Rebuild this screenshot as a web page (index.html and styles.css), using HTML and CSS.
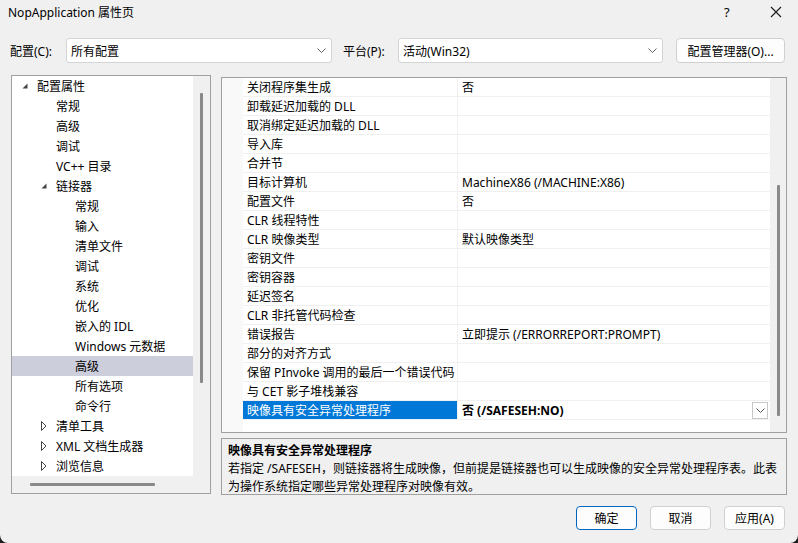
FILE: index.html
```html
<!doctype html>
<html>
<head>
  <meta charset="utf-8">
  <title>NopApplication 属性页</title>
  <link rel="stylesheet" href="styles.css">
</head>
<body>
  <div id="window">
    <div class="titlebar">
      <span class="title">NopApplication 属性页</span>
      <span class="help">?</span>
      <span class="close">
        <svg width="12" height="12" viewBox="0 0 12 12"><path d="M1 1 L11 11 M11 1 L1 11" stroke="#1a1a1a" stroke-width="1.1" fill="none"/></svg>
      </span>
    </div>

    <div class="toolbar">
      <span class="label label-config">配置(C):</span>
      <div class="combo combo-config">
        <span>所有配置</span>
        <svg class="chev" width="9" height="5" viewBox="0 0 9 5"><path d="M0.5 0.5 L4.5 4.5 L8.5 0.5" stroke="#606060" fill="none"/></svg>
      </div>
      <span class="label label-platform">平台(P):</span>
      <div class="combo combo-platform">
        <span>活动(Win32)</span>
        <svg class="chev" width="9" height="5" viewBox="0 0 9 5"><path d="M0.5 0.5 L4.5 4.5 L8.5 0.5" stroke="#606060" fill="none"/></svg>
      </div>
      <button class="btn btn-manager">配置管理器(O)...</button>
    </div>

    <div class="main">
      <div class="tree">
        <div class="tree-items">
          <div class="node lvl0"><span class="exp"><svg width="6" height="6" viewBox="0 0 6 6"><polygon points="5.5,0.5 5.5,5.5 0.5,5.5" fill="#444"/></svg></span>配置属性</div>
          <div class="node lvl1"><span class="exp"></span>常规</div>
          <div class="node lvl1"><span class="exp"></span>高级</div>
          <div class="node lvl1"><span class="exp"></span>调试</div>
          <div class="node lvl1"><span class="exp"></span>VC++ 目录</div>
          <div class="node lvl1"><span class="exp"><svg width="6" height="6" viewBox="0 0 6 6"><polygon points="5.5,0.5 5.5,5.5 0.5,5.5" fill="#444"/></svg></span>链接器</div>
          <div class="node lvl2"><span class="exp"></span>常规</div>
          <div class="node lvl2"><span class="exp"></span>输入</div>
          <div class="node lvl2"><span class="exp"></span>清单文件</div>
          <div class="node lvl2"><span class="exp"></span>调试</div>
          <div class="node lvl2"><span class="exp"></span>系统</div>
          <div class="node lvl2"><span class="exp"></span>优化</div>
          <div class="node lvl2"><span class="exp"></span>嵌入的 IDL</div>
          <div class="node lvl2"><span class="exp"></span>Windows 元数据</div>
          <div class="node lvl2 selected"><span class="exp"></span>高级</div>
          <div class="node lvl2"><span class="exp"></span>所有选项</div>
          <div class="node lvl2"><span class="exp"></span>命令行</div>
          <div class="node lvl1"><span class="exp"><svg width="6" height="10" viewBox="0 0 6 10"><polygon points="0.5,0.5 5,5 0.5,9.5" fill="none" stroke="#444"/></svg></span>清单工具</div>
          <div class="node lvl1"><span class="exp"><svg width="6" height="10" viewBox="0 0 6 10"><polygon points="0.5,0.5 5,5 0.5,9.5" fill="none" stroke="#444"/></svg></span>XML 文档生成器</div>
          <div class="node lvl1"><span class="exp"><svg width="6" height="10" viewBox="0 0 6 10"><polygon points="0.5,0.5 5,5 0.5,9.5" fill="none" stroke="#444"/></svg></span>浏览信息</div>
        </div>
        <div class="vscroll tree-vscroll"><div class="thumb"></div></div>
        <div class="hscroll"><div class="thumb"></div></div>
        <div class="corner"></div>
      </div>

      <div class="right">
        <div class="grid">
          <div class="gutter"></div>
          <div class="rows">
            <div class="row"><div class="name">关闭程序集生成</div><div class="value">否</div></div>
            <div class="row"><div class="name">卸载延迟加载的 DLL</div><div class="value"></div></div>
            <div class="row"><div class="name">取消绑定延迟加载的 DLL</div><div class="value"></div></div>
            <div class="row"><div class="name">导入库</div><div class="value"></div></div>
            <div class="row"><div class="name">合并节</div><div class="value"></div></div>
            <div class="row"><div class="name">目标计算机</div><div class="value">MachineX86 (/MACHINE:X86)</div></div>
            <div class="row"><div class="name">配置文件</div><div class="value">否</div></div>
            <div class="row"><div class="name">CLR 线程特性</div><div class="value"></div></div>
            <div class="row"><div class="name">CLR 映像类型</div><div class="value">默认映像类型</div></div>
            <div class="row"><div class="name">密钥文件</div><div class="value"></div></div>
            <div class="row"><div class="name">密钥容器</div><div class="value"></div></div>
            <div class="row"><div class="name">延迟签名</div><div class="value"></div></div>
            <div class="row"><div class="name">CLR 非托管代码检查</div><div class="value"></div></div>
            <div class="row"><div class="name">错误报告</div><div class="value">立即提示 (/ERRORREPORT:PROMPT)</div></div>
            <div class="row"><div class="name">部分的对齐方式</div><div class="value"></div></div>
            <div class="row"><div class="name">保留 PInvoke 调用的最后一个错误代码</div><div class="value"></div></div>
            <div class="row"><div class="name">与 CET 影子堆栈兼容</div><div class="value"></div></div>
            <div class="row active">
              <div class="name">映像具有安全异常处理程序</div>
              <div class="value"><b>否 (/SAFESEH:NO)</b>
                <span class="dropbtn"><svg width="9" height="5" viewBox="0 0 9 5"><path d="M0.5 0.5 L4.5 4.5 L8.5 0.5" stroke="#505050" fill="none"/></svg></span>
              </div>
            </div>
          </div>
          <div class="vscroll grid-vscroll"><div class="thumb"></div></div>
        </div>

        <div class="desc">
          <div class="desc-title">映像具有安全异常处理程序</div>
          <div class="desc-text">若指定 /SAFESEH，则链接器将生成映像，但前提是链接器也可以生成映像的安全异常处理程序表。此表<br>为操作系统指定哪些异常处理程序对映像有效。</div>
        </div>
      </div>
    </div>

    <div class="footer">
      <button class="btn btn-primary">确定</button>
      <button class="btn">取消</button>
      <button class="btn">应用(A)</button>
    </div>
  </div>
</body>
</html>
```

FILE: styles.css
```css
html {
  background-color: #1e1e1e;
}

body {
  margin: 0;
  font-family: "Noto Sans", "Noto Sans CJK SC", sans-serif;
  font-size: 12px;
  color: #000;
}

#window {
  width: 798px;
  height: 543px;
  background-color: #f0f0f0;
  border-radius: 0 0 8px 8px;
  overflow: hidden;
}

/* title bar */
.titlebar {
  display: flex;
  align-items: center;
  height: 24px;
  padding-left: 8px;
}
.title {
  flex: 1;
}
.help {
  font-size: 13px;
  width: 46px;
}
.close {
  display: flex;
  width: 28px;
}

/* config row */
.toolbar {
  display: flex;
  align-items: center;
  margin-top: 14px;
  height: 25px;
  padding-left: 10px;
}
.label-config {
  width: 56px;
}
.label-platform {
  width: 55px;
  margin-left: 11px;
}
.combo {
  display: flex;
  align-items: center;
  box-sizing: border-box;
  height: 25px;
  padding: 0 5px 0 4px;
  background-color: #fff;
  border: 1px solid #d4d4d4;
  border-radius: 3px;
}
.combo span {
  flex: 1;
}
.combo-config {
  width: 266px;
}
.combo-platform {
  width: 265px;
}
.btn {
  box-sizing: border-box;
  height: 25px;
  font-family: inherit;
  font-size: 12px;
  color: #000;
  background-color: #fdfdfd;
  border: 1px solid #d0d0d0;
  border-radius: 4px;
  padding: 0;
}
.btn-manager {
  width: 109px;
  margin-left: 13px;
}

/* main area */
.main {
  display: flex;
  gap: 10px;
  margin-top: 12px;
  height: 420px;
  padding-left: 11px;
}

.tree {
  display: grid;
  grid-template-columns: 181px 17px;
  grid-template-rows: 400px 17px;
  width: 200px;
  height: 419px;
  box-sizing: border-box;
  border: 1px solid #a0a0a0;
}
.tree-items {
  background-color: #fff;
  overflow: hidden;
}
.node {
  display: flex;
  align-items: center;
  height: 20px;
  white-space: nowrap;
}
.node .exp {
  display: flex;
  align-items: center;
  width: 15px;
  height: 20px;
}
.lvl0 { padding-left: 10px; }
.lvl1 { padding-left: 29px; }
.lvl2 { padding-left: 48px; }
.node.selected {
  background-color: #cccedb;
}

.vscroll .thumb {
  width: 3px;
  margin: 0 auto;
  background-color: #898989;
  border-radius: 1px;
}
.tree-vscroll .thumb {
  margin-top: 17px;
  height: 290px;
}
.hscroll {
  display: flex;
  align-items: center;
}
.hscroll .thumb {
  width: 125px;
  height: 3px;
  margin-left: 18px;
  background-color: #898989;
  border-radius: 1px;
}

.right {
  display: flex;
  flex-direction: column;
  gap: 5px;
  width: 566px;
  margin-top: 2px;
}

/* property grid */
.grid {
  display: flex;
  height: 356px;
  box-sizing: border-box;
  border: 1px solid #a0a0a0;
  background-color: #fff;
}
.gutter {
  width: 21px;
  background-color: #f9f9f9;
}
.rows {
  width: 527px;
}
.row {
  display: flex;
  box-sizing: border-box;
  height: 19px;
  border-bottom: 1px solid #f0f0f0;
  line-height: 20px;
  white-space: nowrap;
}
.row .name {
  box-sizing: border-box;
  width: 215px;
  height: 18px;
  padding-left: 4px;
  border-right: 1px solid #f0f0f0;
}
.row .value {
  display: flex;
  align-items: flex-start;
  flex: 1;
  height: 18px;
  padding-left: 4px;
}
.row.active .name {
  background-color: #0078d7;
  color: #fff;
}
.row .value b {
  flex: 1;
}
.dropbtn {
  display: flex;
  align-items: center;
  justify-content: center;
  box-sizing: border-box;
  width: 16px;
  height: 17px;
  margin: 1px 2px 0 0;
  border: 1px solid #c8c8c8;
  background-color: #fff;
}
.grid-vscroll {
  width: 16px;
  background-color: #f0f0f0;
}
.grid-vscroll .thumb {
  margin-top: 107px;
  height: 231px;
}

/* description */
.desc {
  height: 57px;
  box-sizing: border-box;
  border: 1px solid #a0a0a0;
  padding: 3px 6px 0;
  line-height: 18px;
}
.desc-title {
  font-weight: bold;
}

/* buttons */
.footer {
  display: flex;
  justify-content: flex-end;
  gap: 13px;
  margin-top: 11px;
  padding-right: 13px;
}
.footer .btn {
  width: 61px;
  height: 24px;
}
.btn-primary {
  border-color: #0067c0;
}
```
